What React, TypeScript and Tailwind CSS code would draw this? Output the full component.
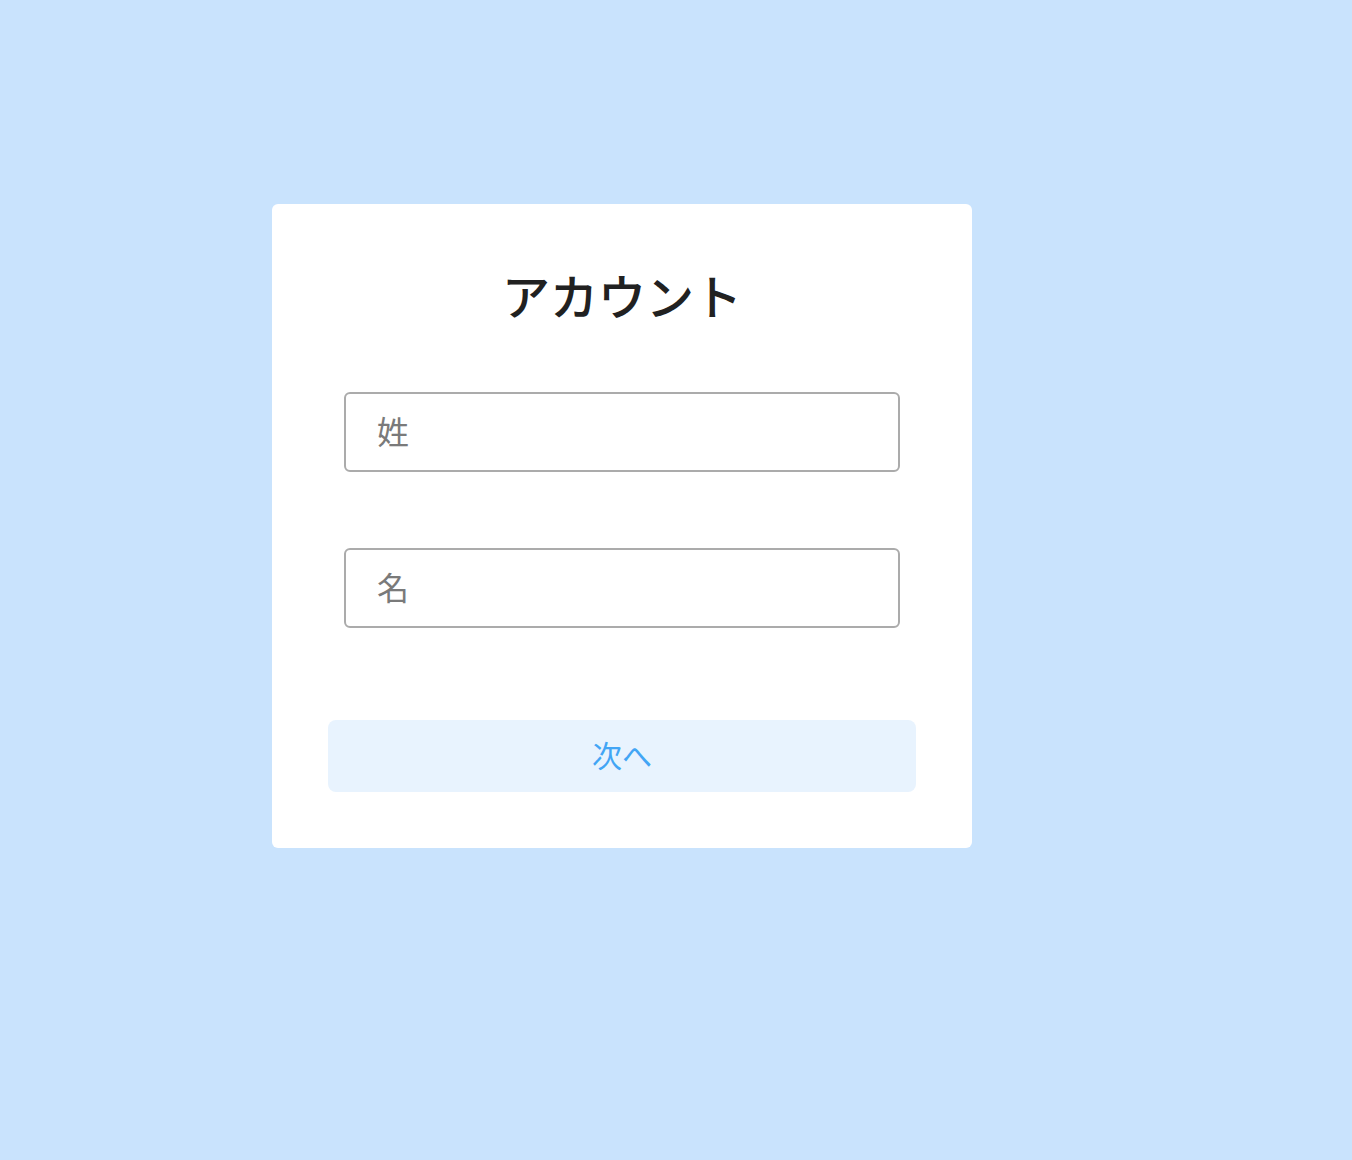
import React from "react";

export default function App() {
  return (
    <div className="min-h-[1160px] w-full bg-[#c9e3fd] pt-[204px] pl-[272px]" style={{ fontFamily: '"Noto Sans CJK JP", "Noto Sans", sans-serif' }}>
      <div className="w-[700px] rounded-[6px] bg-white px-[56px] pt-[54px] pb-[56px]">
        <h1 className="text-center text-[48px] leading-[72px] font-medium text-[#212121]">アカウント</h1>
        <div className="mt-[62px] px-[16px] flex flex-col gap-[76px]">
          <input
            placeholder="姓"
            className="h-[80px] w-full rounded-[6px] border-2 border-[#ababab] pl-[31px] pb-[4px] text-[32px] text-[#212121] placeholder:text-[#7a7a7a] outline-none"
          />
          <input
            placeholder="名"
            className="h-[80px] w-full rounded-[6px] border-2 border-[#ababab] pl-[31px] pb-[4px] text-[32px] text-[#212121] placeholder:text-[#7a7a7a] outline-none"
          />
        </div>
        <button className="mt-[92px] flex h-[72px] w-full items-center justify-center rounded-[8px] bg-[#e8f3fe] pb-[4px] text-[30px] text-[#42a5f5]">
          次へ
        </button>
      </div>
    </div>
  );
}
